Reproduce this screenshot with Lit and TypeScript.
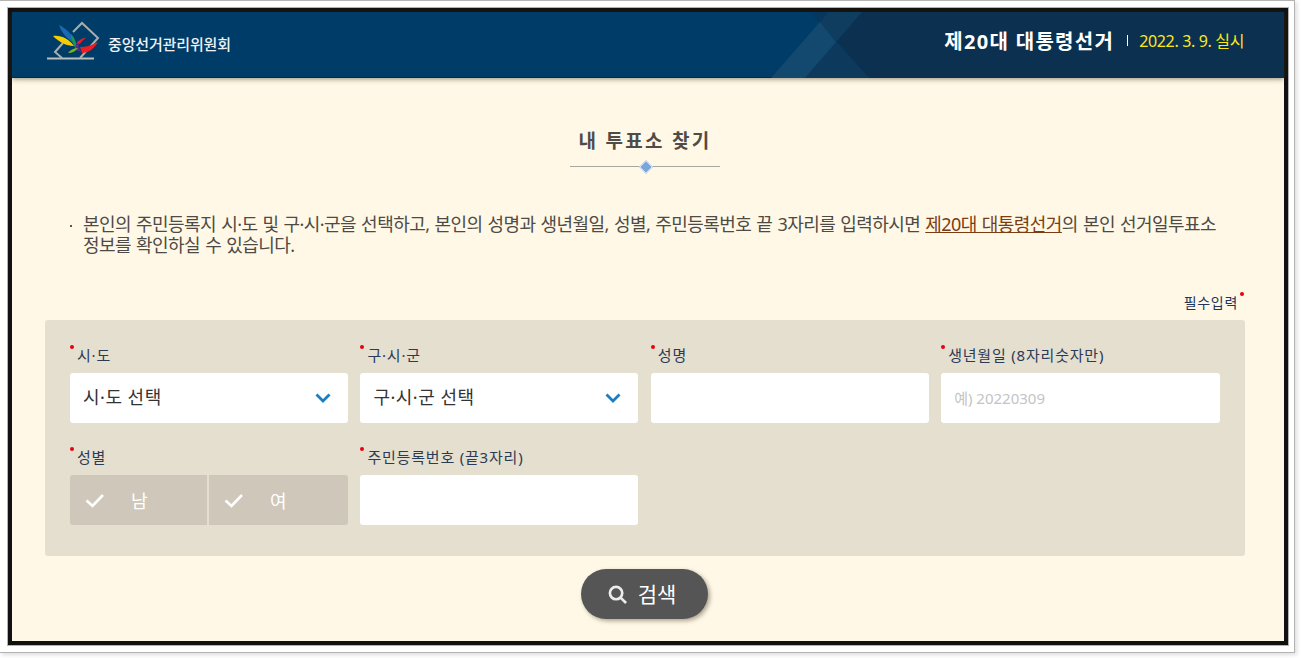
import { LitElement, html, css } from 'lit'
import { customElement } from 'lit/decorators.js'

const chevron = html`<svg class="chevron" width="16" height="10" viewBox="0 0 16 10"><path d="M1.5 1.5 8 8l6.5-6.5" fill="none" stroke="#1a7fc0" stroke-width="2.8"/></svg>`
const check = html`<svg class="check" width="20" height="15" viewBox="0 0 20 15"><path d="M1.5 7.5 7.5 13 18 2" fill="none" stroke="#fff" stroke-width="2.6"/></svg>`

@customElement('app-root')
export class AppRoot extends LitElement {
  static styles = css`
    :host {
      display: block;
      height: 658px;
      background: #fff;
      font-family: 'Noto Sans', 'Noto Sans CJK KR', sans-serif;
      overflow: hidden;
    }
    * { box-sizing: border-box; }

    .outer {
      width: 1295px;
      height: 653px;
      border: 1px solid #b4b4b4;
      border-left: 0;
      padding: 6px 5px 6px 7px;
      box-shadow: 2px 2px 4px #ddd;
    }
    .frame {
      height: 639px;
      border: 1px solid #b4b4b4;
      background: #fff;
    }
    .page {
      height: 637px;
      border: 4px solid #111;
      background: #fff8e6;
      display: flex;
      flex-direction: column;
    }

    header {
      position: relative;
      height: 66px;
      flex: none;
      background: #003c68;
      display: flex;
      align-items: center;
      justify-content: space-between;
      box-shadow: inset 0 -1px 0 #0b2a42, 0 1px 5px rgba(60, 50, 20, 0.55);
      z-index: 1;
      overflow: hidden;
    }
    .deco { position: absolute; left: 728px; top: 0; }
    .logo, .election { position: relative; }
    .logo {
      display: flex;
      align-items: center;
      margin-left: 35px;
      gap: 7px;
      color: #eef2f5;
      font-size: 15px;
      font-weight: 500;
      letter-spacing: -0.15px;
    }
    .logo svg { margin-top: -8px; }
    .logo span { margin-top: -3px; }
    .election {
      display: flex;
      align-items: center;
      margin-right: 40px;
      margin-top: -10px;
      color: #fff;
    }
    .election strong { font-size: 20px; font-weight: 700; letter-spacing: 1.3px; }
    .election span {
      margin-left: 13px;
      padding-left: 12px;
      background: linear-gradient(#fff, #fff) left center / 1px 11px no-repeat;
      color: #ffe81a;
      font-size: 16px;
      letter-spacing: -0.35px;
    }

    main {
      flex: 1;
      padding: 0 39px 0 33px;
      display: flex;
      flex-direction: column;
    }
    h1 {
      margin: 50px 0 0;
      text-align: center;
      color: #4f4c48;
      font-size: 19px;
      line-height: 26px;
      font-weight: 700;
      letter-spacing: 2.3px;
    }
    .rule {
      position: relative;
      width: 150px;
      height: 1px;
      margin: 12px auto 0;
      background: #a8a69f;
    }
    .rule::after {
      content: '';
      position: absolute;
      left: 71px;
      top: -4px;
      width: 8px;
      height: 8px;
      background: #7ba6dc;
      border: 1px solid #e8eef5;
      transform: rotate(45deg);
    }

    .intro {
      margin: 47px 24px 0 38px;
      position: relative;
      color: #4e4a45;
      font-size: 18px;
      line-height: 21px;
      letter-spacing: -0.55px;
      word-spacing: 0.9px;
      word-break: keep-all;
    }
    .intro::before {
      content: '';
      position: absolute;
      left: -13px;
      top: 11px;
      width: 2px;
      height: 2px;
      background: #555;
    }
    .intro u { color: #7c3c12; }

    .required-note {
      margin: 38px 7px 0 0;
      text-align: right;
      color: #22345a;
      font-size: 14px;
      line-height: 18px;
      letter-spacing: 0.7px;
    }
    .required-note span { position: relative; }
    .required-note span::after { content: ''; position: absolute; right: -6px; top: -1px; width: 4px; height: 4px; border-radius: 50%; background: #e8000f; }

    .panel {
      margin-top: 8px;
      height: 236px;
      padding: 25px 25px 0;
      background: #e5dfcf;
      border-radius: 3px;
      display: grid;
      grid-template-columns: 278px 278px 278px 279px;
      grid-auto-rows: 90px;
      column-gap: 12.4px;
      row-gap: 12px;
    }
    .label {
      position: relative;
      height: 28px;
      padding-left: 7px;
      color: #2b3a56;
      font-size: 15px;
      line-height: 20px;
      letter-spacing: 0.8px;
    }
    .label::before { content: ''; position: absolute; left: 0; top: 0; width: 4px; height: 4px; border-radius: 50%; background: #e8000f; }

    .control {
      position: relative;
      display: block;
      width: 100%;
      height: 50px;
      border: 0;
      border-radius: 3px;
      background: #fff;
      font: inherit;
    }
    select.control {
      appearance: none;
      padding: 0 13px 3px;
      color: #333;
      font-size: 18px;
      letter-spacing: 0.5px;
    }
    input.control {
      padding: 0 13px;
      font-size: 15px;
    }
    input.control::placeholder { color: #c4c4c4; opacity: 1; }
    .select-wrap { position: relative; }
    .chevron { position: absolute; right: 17px; top: 20px; }

    .gender { display: flex; height: 50px; gap: 2px; }
    .gender button {
      flex: 1;
      display: flex;
      align-items: center;
      border: 0;
      padding: 0 0 0 15px;
      background: #cfc8ba;
      color: #fff;
      font: inherit;
      font-size: 18px;
      letter-spacing: 0;
    }
    .gender button:first-child { flex: none; width: 137px; border-radius: 3px 0 0 3px; }
    .gender button:last-child { border-radius: 0 3px 3px 0; }
    .gender b { font-weight: 400; margin-left: 26px; }

    .actions { display: flex; justify-content: center; margin-top: 13px; padding-right: 1px; }
    .search {
      display: flex;
      align-items: center;
      justify-content: center;
      gap: 11px;
      width: 127px;
      height: 50px;
      padding-right: 11px;
      border: 0;
      border-radius: 25px;
      background: #555;
      color: #fff;
      font: inherit;
      font-size: 21px;
      box-shadow: 2px 2px 4px rgba(70, 60, 40, 0.45);
    }
    .search span { margin-top: -3px; }
  `

  render() {
    return html`
      <div class="outer"><div class="frame"><div class="page">
        <header>
          <svg class="deco" width="561" height="66" viewBox="0 0 561 66">
            <path d="M71 0H561V66H129Z" fill="#0b3050"/>
            <path d="M71 0H88L80 10Z" fill="#07375f"/>
            <path d="M96 30 129 66H65Z" fill="#0d3a5c"/>
            <path d="M88 0H122L96 30 80 10Z" fill="#0e3d60"/>
            <path d="M31 66 80 10 96 30 65 66Z" fill="#13496f"/>
          </svg>
          <div class="logo">
            <svg width="54" height="42" viewBox="0 0 54 42">
              <path d="M0 38.5H47" stroke="#b9bdbd" stroke-width="2" fill="none"/>
              <path d="M16 23 8 32 15 38M26 12 35 3 51 18 33 38" stroke="#a9aeac" stroke-width="2" fill="none"/>
              <path d="M12 5C20 9 26 15 29 24 22 21 15 14 12 5Z" fill="#1a69b5"/>
              <path d="M6 16C14 15 22 19 27 26 19 26 12 22 6 16Z" fill="#f6cf00"/>
              <path d="M24 14C27 17 30 22 29 29 26 25 24 19 24 14Z" fill="#18955b"/>
              <path d="M29 30C28 25 29 22 32 20 31 24 32 28 34 32Z" fill="#54308a"/>
              <path d="M30 23C32 20 35 18 39 18 36 20 34 22 33 24Z" fill="#ee1c25"/>
              <path d="M33 27C39 27 46 25 51 22 47 29 41 33 35 33Z" fill="#ee1c25"/>
              <path d="M21 33C23 30 27 28 31 28 29 31 25 33 21 33Z" fill="#7ab51d"/>
            </svg>
            <span>중앙선거관리위원회</span>
          </div>
          <div class="election">
            <strong>제20대 대통령선거</strong>
            <span>2022. 3. 9. 실시</span>
          </div>
        </header>
        <main>
          <h1>내 투표소 찾기</h1>
          <div class="rule"></div>
          <p class="intro">본인의 주민등록지 시·도 및 구·시·군을 선택하고, 본인의 성명과 생년월일, 성별, 주민등록번호 끝 3자리를 입력하시면 <u>제20대 대통령선거</u>의 본인 선거일투표소 정보를 확인하실 수 있습니다.</p>
          <div class="required-note"><span>필수입력</span></div>
          <form class="panel">
            <div>
              <div class="label">시·도</div>
              <div class="select-wrap">
                <select class="control"><option>시·도 선택</option></select>${chevron}
              </div>
            </div>
            <div>
              <div class="label">구·시·군</div>
              <div class="select-wrap">
                <select class="control"><option>구·시·군 선택</option></select>${chevron}
              </div>
            </div>
            <div>
              <div class="label">성명</div>
              <input class="control" />
            </div>
            <div>
              <div class="label">생년월일 (8자리숫자만)</div>
              <input class="control" placeholder="예) 20220309" />
            </div>
            <div>
              <div class="label">성별</div>
              <div class="gender">
                <button type="button">${check}<b>남</b></button>
                <button type="button">${check}<b>여</b></button>
              </div>
            </div>
            <div>
              <div class="label">주민등록번호 (끝3자리)</div>
              <input class="control" />
            </div>
          </form>
          <div class="actions">
            <button class="search" type="button">
              <svg width="19" height="19" viewBox="0 0 20 20"><circle cx="8.5" cy="8.5" r="6.5" fill="none" stroke="#ececec" stroke-width="2.8"/><path d="M13.5 13.5 19 19" stroke="#ececec" stroke-width="2.8"/></svg>
              <span>검색</span>
            </button>
          </div>
        </main>
      </div></div></div>
    `
  }
}
